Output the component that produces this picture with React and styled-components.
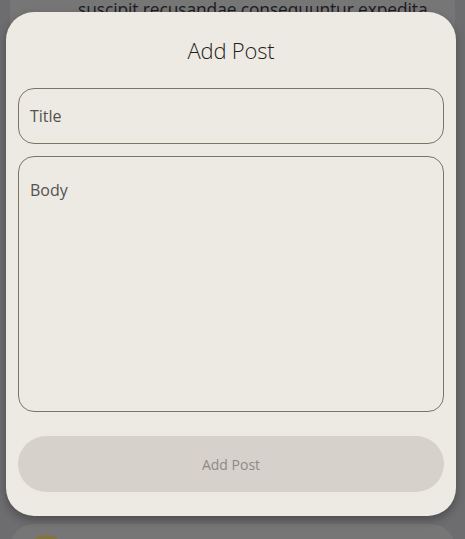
import React from 'react';
import styled, { createGlobalStyle } from 'styled-components';

const GlobalStyle = createGlobalStyle`
  html, body {
    margin: 0;
    padding: 0;
    background: #6d6c6f;
    overflow: hidden;
  }
  * { box-sizing: border-box; }
`;

const Page = styled.div`
  height: 539px;
  overflow: hidden;
  position: relative;
  font-family: "Open Sans", "Noto Sans", sans-serif;
`;

const Feed = styled.div`
  display: flex;
  flex-direction: column;
  gap: 10px;
  padding: 0 10px;
  margin-top: -3px;
`;

const PostCard = styled.div`
  background: #767676;
  border-radius: ${({ $top }) => ($top ? '0 0 24px 24px' : '24px')};
  display: grid;
  grid-template-columns: 68px 1fr;
  height: ${({ $height }) => $height}px;
  padding: ${({ $top }) => ($top ? '0' : '11px 0 0 16px')};
`;

const Avatar = styled.div`
  width: 40px;
  height: 40px;
  border-radius: 50%;
  background: #83733c;
`;

const PostText = styled.p`
  margin: 0;
  font-size: 17.4px;
  letter-spacing: -0.1px;
  line-height: 24px;
  color: #1c1c1c;
  grid-column: 2;
  white-space: nowrap;
`;

const Overlay = styled.div`
  position: absolute;
  inset: 0;
  display: flex;
  justify-content: center;
  align-items: flex-start;
  padding: 12px 9px 0 6px;
`;

const Modal = styled.form`
  width: 450px;
  height: 504px;
  background: #ede9e3;
  border-radius: 28px;
  box-shadow: 0 4px 10px rgba(0, 0, 0, 0.3);
  padding: 0 12px;
  display: flex;
  flex-direction: column;
`;

const Heading = styled.h2`
  margin: 0;
  height: 76px;
  display: flex;
  align-items: center;
  justify-content: center;
  font-weight: 300;
  font-size: 22px;
  color: #1f1f1f;
  letter-spacing: -0.2px;
`;

const Field = styled.div`
  border: 1px solid #7b7664;
  border-radius: 16px;
  height: ${({ $height }) => $height}px;
  margin-bottom: ${({ $gap }) => $gap}px;
  padding: ${({ $padTop }) => $padTop}px 11px 0;
  font-size: 16px;
  color: #545250;
`;

const SubmitButton = styled.button`
  height: 56px;
  border: none;
  border-radius: 28px;
  background: #d6d1cb;
  color: #8d8a86;
  font-family: "Open Sans", "Noto Sans", sans-serif;
  font-size: 14px;
  width: 100%;
`;

export default function App() {
  return (
    <Page>
      <GlobalStyle />
      <Feed>
        <PostCard $top $height={517}>
          <PostText>suscipit recusandae consequuntur expedita</PostText>
        </PostCard>
        <PostCard $height={120}>
          <Avatar />
        </PostCard>
      </Feed>
      <Overlay>
        <Modal>
          <Heading>Add Post</Heading>
          <Field $height={56} $gap={12} $padTop={16}>Title</Field>
          <Field $height={256} $gap={24} $padTop={22}>Body</Field>
          <SubmitButton type="button">Add Post</SubmitButton>
        </Modal>
      </Overlay>
    </Page>
  );
}
